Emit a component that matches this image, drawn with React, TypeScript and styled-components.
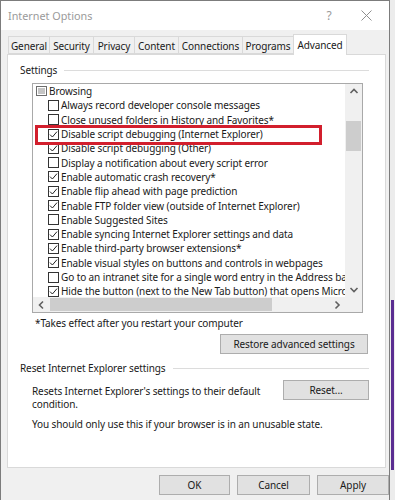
import React from "react";
import styled, { createGlobalStyle } from "styled-components";

const FONT = `"Noto Sans", "Open Sans", sans-serif`;

const GlobalStyle = createGlobalStyle`
  html, body { margin: 0; padding: 0; background: #efefef; }
  body { font-family: ${FONT}; font-size: 10px; letter-spacing: -0.1px; color: #1a1a1a; }
`;

const Screen = styled.div`
  display: flex;
  width: 395px;
  height: 500px;
  overflow: hidden;
`;

const Window = styled.div`
  width: 390px;
  height: 500px;
  box-sizing: border-box;
  border: 1px solid #7c7c7c;
  border-bottom: none;
  background: #f0f0f0;
  display: flex;
  flex-direction: column;
  flex-shrink: 0;
`;

const Desktop = styled.div`
  flex: 1;
  background: #ececec;
  display: flex;
  flex-direction: column;
  padding-top: 300px;
`;

const DesktopAccent = styled.div`
  width: 3px;
  height: 170px;
  margin-left: 1px;
  background: #5a2d91;
`;

const TitleBar = styled.div`
  height: 29px;
  background: #ffffff;
  display: flex;
  align-items: center;
  padding-left: 7px;
`;

const Title = styled.div`
  flex: 1;
  font-size: 10.8px;
  letter-spacing: 0;
  color: #9a9a9a;
`;

const TitleButton = styled.div<{ $w: number }>`
  width: ${(p) => p.$w}px;
  height: 29px;
  display: flex;
  align-items: center;
  justify-content: center;
  color: #9a9a9a;
  font-size: 12px;
`;

const TabStrip = styled.div`
  display: flex;
  align-items: flex-end;
  margin: 4px 0 0 8px;
  height: 20px;
  position: relative;
  z-index: 1;
`;

const Tab = styled.div<{ $active?: boolean; $w: number }>`
  box-sizing: border-box;
  width: ${(p) => p.$w}px;
  height: ${(p) => (p.$active ? 21 : 18)}px;
  margin-bottom: ${(p) => (p.$active ? -1 : 0)}px;
  padding-top: ${(p) => (p.$active ? 0 : 1)}px;
  border: 1px solid #d9d9d9;
  border-bottom: ${(p) => (p.$active ? "none" : "1px solid #d9d9d9")};
  margin-left: -1px;
  background: ${(p) => (p.$active ? "#ffffff" : "#f0f0f0")};
  display: flex;
  align-items: center;
  justify-content: center;
  font-size: 10px;
  color: #1a1a1a;
  white-space: nowrap;
`;

const Panel = styled.div`
  box-sizing: border-box;
  margin-left: 6px;
  width: 379px;
  height: 414px;
  background: #ffffff;
  border: 1px solid #d9d9d9;
  display: flex;
  flex-direction: column;
  padding: 8px 16px 0 12px;
`;

const GroupHeader = styled.div<{ $top?: number }>`
  display: flex;
  align-items: center;
  gap: 7px;
  height: 14px;
  margin-top: ${(p) => p.$top ?? 0}px;
  font-size: 10px;
  &::after {
    content: "";
    flex: 1;
    border-top: 1px solid #dcdcdc;
    margin-top: 1px;
  }
`;

const ListBox = styled.div`
  box-sizing: border-box;
  margin: 6px 0 0 12px;
  width: 331px;
  height: 230px;
  border: 1px solid #a9a9a9;
  display: grid;
  grid-template-columns: 1fr 17px;
  grid-template-rows: 1fr 15px;
`;

const Viewport = styled.div`
  position: relative;
  overflow: hidden;
  background: #ffffff;
`;

const Row = styled.div<{ $indent: number }>`
  height: 14.3px;
  display: flex;
  align-items: center;
  padding-left: ${(p) => p.$indent}px;
  white-space: nowrap;
  font-size: 10px;
  gap: 2px;
`;

const Box = styled.span`
  box-sizing: border-box;
  width: 11px;
  height: 11px;
  border: 1px solid #333333;
  display: inline-flex;
  align-items: center;
  justify-content: center;
  flex-shrink: 0;
  background: #ffffff;
`;

const Highlight = styled.div`
  position: absolute;
  left: 2px;
  top: 41px;
  width: 287px;
  height: 20px;
  box-sizing: border-box;
  border: 3px solid #d21f2d;
  pointer-events: none;
`;

const VScroll = styled.div`
  background: #f0f0f0;
  display: flex;
  flex-direction: column;
`;

const HScroll = styled.div`
  background: #f0f0f0;
  display: flex;
`;

const Arrow = styled.div`
  width: 17px;
  height: 15px;
  display: flex;
  align-items: center;
  justify-content: center;
  flex-shrink: 0;
`;

const VThumbTrack = styled.div`
  flex: 1;
  padding-top: 22px;
`;

const VThumb = styled.div`
  margin: 0 1px;
  height: 30px;
  background: #cdcdcd;
`;

const HThumbTrack = styled.div`
  flex: 1;
  display: flex;
  padding: 1px 0;
`;

const HThumb = styled.div`
  width: 222px;
  background: #cdcdcd;
`;

const Corner = styled.div`
  background: #f0f0f0;
`;

const Note = styled.div`
  margin: 3px 0 0 15px;
  height: 14px;
  line-height: 14px;
`;

const ButtonRow = styled.div`
  display: flex;
  justify-content: flex-end;
  margin-top: 4px;
  padding-right: 1px;
`;

const Button = styled.div<{ $w: number }>`
  box-sizing: border-box;
  width: ${(p) => p.$w}px;
  height: 20px;
  background: #e1e1e1;
  border: 1px solid #adadad;
  display: flex;
  align-items: center;
  justify-content: center;
  font-size: 10px;
  color: #1a1a1a;
`;

const ResetRow = styled.div`
  display: flex;
  align-items: flex-start;
  margin: 5px 0 0 12px;
`;

const Para = styled.div<{ $top?: number; $left?: number }>`
  flex: 1;
  line-height: 12.5px;
  margin-top: ${(p) => p.$top ?? 0}px;
  margin-left: ${(p) => p.$left ?? 0}px;
  white-space: nowrap;
`;

const Footer = styled.div`
  display: flex;
  justify-content: flex-end;
  gap: 7px;
  margin-top: 7px;
`;

const Check = () => (
  <svg width="9" height="9" viewBox="0 0 9 9">
    <path d="M1 4.6 L3.4 7 L8 1.6" fill="none" stroke="#222" strokeWidth="1" />
  </svg>
);

const Chevron = ({ dir }: { dir: "up" | "down" | "left" | "right" }) => {
  const d = {
    up: "M1.5 6 L5 2.5 L8.5 6",
    down: "M1.5 3 L5 6.5 L8.5 3",
    left: "M6 1.5 L2.5 5 L6 8.5",
    right: "M3.5 1.5 L7 5 L3.5 8.5",
  }[dir];
  return (
    <svg width="10" height="10" viewBox="0 0 10 10">
      <path d={d} fill="none" stroke="#606060" strokeWidth="1.6" />
    </svg>
  );
};

const FolderIcon = () => (
  <svg width="11" height="10" viewBox="0 0 11 10">
    <rect x="0.5" y="0.5" width="10" height="9" fill="#fff" stroke="#6d6d6d" />
    <path d="M2 3 H9 M2 5 H9 M2 7 H9" stroke="#8a8a8a" strokeWidth="1" />
  </svg>
);

const items: [string, boolean][] = [
  ["Always record developer console messages", false],
  ["Close unused folders in History and Favorites*", false],
  ["Disable script debugging (Internet Explorer)", true],
  ["Disable script debugging (Other)", true],
  ["Display a notification about every script error", false],
  ["Enable automatic crash recovery*", true],
  ["Enable flip ahead with page prediction", true],
  ["Enable FTP folder view (outside of Internet Explorer)", true],
  ["Enable Suggested Sites", false],
  ["Enable syncing Internet Explorer settings and data", true],
  ["Enable third-party browser extensions*", true],
  ["Enable visual styles on buttons and controls in webpages", true],
  ["Go to an intranet site for a single word entry in the Address bar", false],
  ["Hide the button (next to the New Tab button) that opens Microsoft Edge", true],
];

const tabs: [string, number][] = [
  ["General", 42],
  ["Security", 45],
  ["Privacy", 42],
  ["Content", 45],
  ["Connections", 65],
  ["Programs", 52],
  ["Advanced", 54],
];

export default function App() {
  return (
    <Screen>
      <GlobalStyle />
      <Window>
        <TitleBar>
          <Title>Internet Options</Title>
          <TitleButton $w={28}>?</TitleButton>
          <TitleButton $w={46}>
            <svg width="11" height="11" viewBox="0 0 11 11">
              <path d="M0.5 0.5 L10.5 10.5 M10.5 0.5 L0.5 10.5" stroke="#8f8f8f" strokeWidth="1" />
            </svg>
          </TitleButton>
        </TitleBar>

        <TabStrip>
          {tabs.map(([t, w]) => (
            <Tab key={t} $w={w} $active={t === "Advanced"}>
              {t}
            </Tab>
          ))}
        </TabStrip>

        <Panel>
          <GroupHeader>Settings</GroupHeader>
          <ListBox>
            <Viewport>
              <Row $indent={3}>
                <FolderIcon />
                <span>Browsing</span>
              </Row>
              {items.map(([label, checked]) => (
                <Row key={label} $indent={15}>
                  <Box>{checked && <Check />}</Box>
                  <span>{label}</span>
                </Row>
              ))}
              <Highlight />
            </Viewport>
            <VScroll>
              <Arrow>
                <Chevron dir="up" />
              </Arrow>
              <VThumbTrack>
                <VThumb />
              </VThumbTrack>
              <Arrow>
                <Chevron dir="down" />
              </Arrow>
            </VScroll>
            <HScroll>
              <Arrow>
                <Chevron dir="left" />
              </Arrow>
              <HThumbTrack>
                <HThumb />
              </HThumbTrack>
              <Arrow>
                <Chevron dir="right" />
              </Arrow>
            </HScroll>
            <Corner />
          </ListBox>
          <Note>*Takes effect after you restart your computer</Note>
          <ButtonRow>
            <Button $w={148}>Restore advanced settings</Button>
          </ButtonRow>
          <GroupHeader $top={7}>Reset Internet Explorer settings</GroupHeader>
          <ResetRow>
            <Para $top={5}>
              Resets Internet Explorer's settings to their default
              <br />
              condition.
            </Para>
            <Button $w={86}>Reset...</Button>
          </ResetRow>
          <Para $top={8} $left={12}>
            You should only use this if your browser is in an unusable state.
          </Para>
        </Panel>

        <Footer>
          <Button $w={71}>OK</Button>
          <Button $w={73}>Cancel</Button>
          <Button $w={72}>Apply</Button>
        </Footer>
      </Window>
      <Desktop>
        <DesktopAccent />
      </Desktop>
    </Screen>
  );
}
